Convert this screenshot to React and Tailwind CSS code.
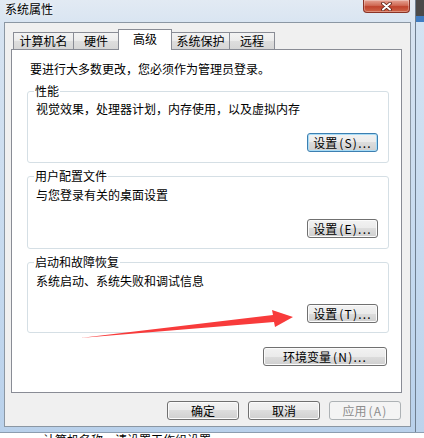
import React from "react";

function WinButton({ children, className = "", focused = false, disabled = false }) {
  let look =
    "border-[#707070] bg-[linear-gradient(to_bottom,#f2f2f2_0%,#ebebeb_50%,#dddddd_50%,#cfcfcf_100%)] shadow-[inset_0_0_0_1px_#fbfbfb] text-black";
  if (focused) {
    look =
      "border-[#3c7fb1] bg-[linear-gradient(to_bottom,#f2f2f2_0%,#ebebeb_50%,#dddddd_50%,#cfcfcf_100%)] shadow-[inset_0_0_0_1px_#a9dcf6] text-black";
  }
  if (disabled) {
    look = "border-[#adb2b5] bg-[#f4f4f4] text-[#8d8d8d]";
  }
  return (
    <div
      className={`flex h-[19px] items-center justify-center rounded-[3px] border text-[12px] leading-none ${look} ${className}`}
    >
      {children}
    </div>
  );
}

function Label({ cn, hot }) {
  return (
    <>
      <span>{cn}</span>
      {hot && <span className="ml-[2px] tracking-[1.2px]">{hot}</span>}
    </>
  );
}

function Tab({ children, className = "" }) {
  return (
    <div
      className={`-ml-px flex h-[17px] items-center justify-center border border-b-0 border-[#898c95] bg-[linear-gradient(to_bottom,#f3f3f3_0%,#ebebeb_50%,#dedede_50%,#d6d6d6_100%)] text-[12px] leading-none first:ml-0 ${className}`}
    >
      {children}
    </div>
  );
}

function Group({ title, text, hot, className = "", bodyClass = "" }) {
  return (
    <fieldset
      className={`ml-[15px] w-[362px] rounded-[3px] border border-[#d5dfe5] ${className}`}
    >
      <legend className="ml-[6px] px-[1px] text-[12px] leading-[16px]">
        {title}
      </legend>
      <div className={`pl-[8px] pr-[10px] ${bodyClass}`}>
        <p className="text-[12px] leading-[16px]">{text}</p>
        {hot}
      </div>
    </fieldset>
  );
}

export default function App() {
  return (
    <div className="relative flex h-[438px] w-[424px] flex-col overflow-hidden bg-white font-['Noto_Sans_CJK_SC',sans-serif] text-black">

      <div className="flex h-[432px]">

        {/* window */}
        <div className="flex h-[432px] w-[415px] flex-col bg-[linear-gradient(to_bottom,#e2eaf3_0px,#d6e3f1_30px,#c6daef_60%,#b9d1eb_100%)] px-[4px]">

          {/* title bar */}
          <div className="flex h-[22px] items-start justify-between">
            <span className="pl-[1px] pt-[1px] text-[12px] leading-[16px] [text-shadow:0_0_5px_#fff]">
              系统属性
            </span>

            <div className="mr-[1px] flex h-[13px] w-[47px] items-center justify-center rounded-b-[4px] border border-t-0 border-[#8a3326] bg-[linear-gradient(to_bottom,#e6a394_0%,#d06a55_45%,#c0432d_55%,#cf6448_100%)] shadow-[inset_0_0_0_1px_rgba(255,255,255,0.3)]">
              <svg width="11" height="9" viewBox="0 0 11 9">
                <path d="M2 1.5 L9 7.5 M9 1.5 L2 7.5" stroke="#5a1f14" strokeWidth="3.6" strokeLinecap="round" />
                <path d="M2 1.5 L9 7.5 M9 1.5 L2 7.5" stroke="#ffffff" strokeWidth="2" strokeLinecap="round" />
              </svg>
            </div>
          </div>

          {/* client */}
          <div className="flex h-[405px] flex-col border border-[#8b97a3] bg-[#f0f0f0] pt-[6px]">

            {/* tabs */}
            <div className="flex h-[20px] items-end pl-[8px]">
              <Tab className="w-[61px]">计算机名</Tab>
              <Tab className="w-[46px]">硬件</Tab>
              <div className="relative z-10 -mb-px -ml-px flex h-[21px] w-[54px] items-center justify-center border border-b-0 border-[#898c95] bg-white pb-[2px] text-[12px] leading-none">
                高级
              </div>
              <Tab className="w-[59px]">系统保护</Tab>
              <Tab className="w-[46px]">远程</Tab>
            </div>

            {/* panel */}
            <div className="ml-[6px] flex h-[344px] w-[391px] flex-col border border-[#898c95] bg-white">

              <p className="ml-[18px] mt-[11px] text-[12px] leading-[16px]">
                要进行大多数更改，您必须作为管理员登录。
              </p>

              <Group
                className="mt-[6px]"
                bodyClass="pt-[2px] pb-[10px]"
                title="性能"
                text="视觉效果，处理器计划，内存使用，以及虚拟内存"
                hot={
                  <div className="mt-[16px] flex justify-end">
                    <WinButton focused className="w-[71px]">
                      <Label cn="设置" hot="(S)..." />
                    </WinButton>
                  </div>
                }
              />

              <Group
                className="mt-[5px]"
                bodyClass="pt-[3px] pb-[10px]"
                title="用户配置文件"
                text="与您登录有关的桌面设置"
                hot={
                  <div className="mt-[16px] flex justify-end">
                    <WinButton className="w-[71px]">
                      <Label cn="设置" hot="(E)..." />
                    </WinButton>
                  </div>
                }
              />

              <Group
                className="mt-[5px]"
                bodyClass="pt-[3px] pb-[9px]"
                title="启动和故障恢复"
                text="系统启动、系统失败和调试信息"
                hot={
                  <div className="mt-[15px] flex justify-end">
                    <WinButton className="w-[71px]">
                      <Label cn="设置" hot="(T)..." />
                    </WinButton>
                  </div>
                }
              />

              <div className="mr-[14px] mt-[14px] flex justify-end">
                <WinButton className="w-[124px]">
                  <Label cn="环境变量" hot="(N)..." />
                </WinButton>
              </div>
            </div>

            {/* dialog buttons */}
            <div className="mt-[8px] flex justify-end gap-[9px] pr-[9px]">
              <WinButton className="w-[72px]">确定</WinButton>
              <WinButton className="w-[72px]">取消</WinButton>
              <WinButton disabled className="w-[72px]">
                <Label cn="应用" hot="(A)" />
              </WinButton>
            </div>
          </div>
        </div>

        {/* desktop behind, right edge */}
        <div className="flex flex-1 flex-col border-l border-[#6f7f90]">
          <div className="h-[16px] bg-[#4a4a4a]" />
          <div className="h-[6px] bg-[#3f7cc2]" />
          <div className="flex-1 bg-[linear-gradient(to_bottom,#d3e3f3,#bcd3ec)]" />
        </div>
      </div>

      {/* desktop behind, bottom edge */}
      <div className="h-[6px] overflow-hidden border-t border-[#8c9db0] bg-white pl-[43px]">
        <p className="text-[12px] leading-[14px]">计算机名称，请设置工作组设置</p>
      </div>

      {/* annotation arrow */}
      <svg
        className="pointer-events-none absolute left-0 top-0"
        width="424"
        height="438"
        viewBox="0 0 424 438"
      >
        <polygon
          points="80,338 273,315 272,310 293,317 275,327 274,322"
          fill="#f83b3b"
        />
      </svg>
    </div>
  );
}
